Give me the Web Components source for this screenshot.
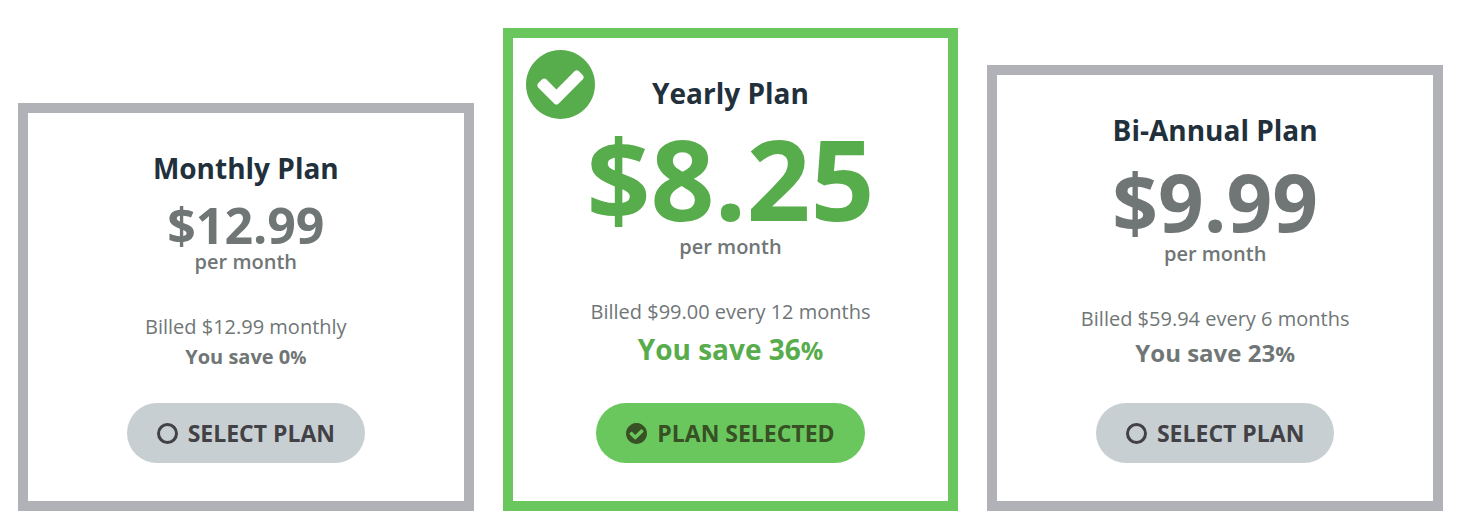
<!DOCTYPE html>
<html lang="en">
<head>
<meta charset="utf-8">
<meta name="viewport" content="width=device-width, initial-scale=1">
<title>Choose a plan</title>
<style>
  body {
    margin: 0;
    background: #fff;
    color: #707676;
    font-family: "Open Sans", "Noto Sans", sans-serif;
    font-size: 20px;
    line-height: 30px;
  }
</style>
</head>
<body>
<plan-list>
  <plan-card>
    <span slot="name">Monthly Plan</span>
    <span slot="price">$12.99</span>
    <span slot="billing">Billed $12.99 monthly</span>
    <span slot="saving">You save 0</span>
  </plan-card>
  <plan-card selected>
    <span slot="name">Yearly Plan</span>
    <span slot="price">$8.25</span>
    <span slot="billing">Billed $99.00 every 12 months</span>
    <span slot="saving">You save 36</span>
  </plan-card>
  <plan-card size="medium">
    <span slot="name">Bi-Annual Plan</span>
    <span slot="price">$9.99</span>
    <span slot="billing">Billed $59.94 every 6 months</span>
    <span slot="saving">You save 23</span>
  </plan-card>
</plan-list>

<template id="plan-list">
  <style>
    :host {
      display: grid;
      grid-template-columns: repeat(3, minmax(0, 1fr));
      align-items: end;
      gap: 29px;
      padding: 28px 19px 19px 18px;
    }
    @media (max-width: 900px) {
      :host { grid-template-columns: minmax(0, 1fr); }
    }
  </style>
  <slot></slot>
</template>

<template id="check-icon">
  <style>
    :host { display: block; }
    svg { display: block; width: 100%; height: 100%; }
    circle { fill: none; stroke: currentColor; stroke-width: 3; }
    path { fill: currentColor; }
    :host([checked]) .empty, :host(:not([checked])) .full { display: none; }
  </style>
  <svg class="empty" viewBox="0 0 21 21" aria-hidden="true"><circle cx="10.5" cy="10.5" r="9"/></svg>
  <svg class="full" viewBox="0 0 1536 1536" aria-hidden="true"><path d="M1284 606q0-28-18-46l-91-90q-19-19-45-19t-45 19l-408 407-226-226q-19-19-45-19t-45 19l-91 90q-18 18-18 46 0 27 18 45l362 362q19 19 45 19 27 0 46-19l543-543q18-18 18-45zm252 162q0 209-103 385.5t-279.5 279.5-385.5 103-385.5-103-279.5-279.5-103-385.5 103-385.5 279.5-279.5 385.5-103 385.5 103 279.5 279.5 103 385.5z"/></svg>
</template>

<template id="plan-button">
  <style>
    :host { display: block; }
    button {
      display: flex;
      align-items: center;
      gap: 10px;
      height: 60px;
      padding: 0 30px;
      border: 0;
      border-radius: 30px;
      background: #c8cfd2;
      color: #424246;
      font: 700 23px/30px "Open Sans", "Noto Sans", sans-serif;
      white-space: nowrap;
      cursor: pointer;
    }
    :host([selected]) button { background: #6ac75e; color: #375024; }
    check-icon { width: 21px; height: 21px; flex: none; }
  </style>
  <button type="button"><check-icon></check-icon><slot></slot></button>
</template>

<template id="plan-card">
  <style>
    :host {
      --accent: #707676;
      --price: 50px;
      --price-line: 50px;
      --price-gap: 12px;
      --saving: 20px;
      --saving-line: 30px;
      --percent: 18px;
      position: relative;
      display: flex;
      flex-direction: column;
      align-items: center;
      box-sizing: border-box;
      padding: 35px 10px 38px;
      border: 10px solid #b1b2b7;
      text-align: center;
    }
    :host([size="medium"]) {
      --price: 80px;
      --price-line: 82px;
      --price-gap: 10px;
      --saving: 24px;
      --saving-line: 38px;
      --percent: 22px;
    }
    :host([selected]) {
      --accent: #57ac4b;
      --price: 112px;
      --price-line: 114px;
      --price-gap: 8px;
      --saving: 28px;
      --saving-line: 45px;
      --percent: 25px;
      border-color: #6ac75e;
    }
    h2, p { margin: 0; }
    h2 { color: #22303c; font-size: 28px; font-weight: 700; line-height: 40px; }
    .price {
      margin-top: var(--price-gap);
      color: var(--accent);
      font-size: var(--price);
      font-weight: 700;
      line-height: var(--price-line);
    }
    .period { font-weight: 600; line-height: 24px; }
    .billing { margin-top: 38px; }
    .saving {
      color: var(--accent);
      font-size: var(--saving);
      font-weight: 700;
      line-height: var(--saving-line);
    }
    .percent { font-size: var(--percent); line-height: 20px; }
    plan-button { margin-top: 31px; }
    .badge {
      position: absolute;
      top: 12px;
      left: 13px;
      width: 69px;
      height: 69px;
      color: #57ac4b;
    }
    :host(:not([selected])) .badge { display: none; }
  </style>
  <check-icon class="badge" checked></check-icon>
  <h2><slot name="name"></slot></h2>
  <p class="price"><slot name="price"></slot></p>
  <p class="period">per month</p>
  <p class="billing"><slot name="billing"></slot></p>
  <p class="saving"><slot name="saving"></slot><span class="percent">%</span></p>
  <plan-button></plan-button>
</template>

<script>
  class TemplateElement extends HTMLElement {
    constructor() {
      super();
      const template = document.getElementById(this.localName);
      this.attachShadow({ mode: "open" }).append(template.content.cloneNode(true));
    }
  }

  class CheckIcon extends TemplateElement {}

  class PlanButton extends TemplateElement {
    static observedAttributes = ["selected"];
    attributeChangedCallback() { this.update(); }
    connectedCallback() { this.update(); }
    update() {
      const selected = this.hasAttribute("selected");
      this.shadowRoot.querySelector("check-icon").toggleAttribute("checked", selected);
      this.shadowRoot.querySelector("button").setAttribute("aria-pressed", selected);
      this.textContent = selected ? "PLAN SELECTED" : "SELECT PLAN";
    }
  }

  class PlanCard extends TemplateElement {
    static observedAttributes = ["selected"];
    connectedCallback() {
      this.update();
      this.shadowRoot.querySelector("plan-button").addEventListener("click", () => {
        this.dispatchEvent(new CustomEvent("plan-select", { bubbles: true }));
      });
    }
    attributeChangedCallback() { this.update(); }
    update() {
      this.shadowRoot.querySelector("plan-button")
        .toggleAttribute("selected", this.hasAttribute("selected"));
    }
  }

  class PlanList extends TemplateElement {
    connectedCallback() {
      this.addEventListener("plan-select", (event) => {
        for (const card of this.querySelectorAll("plan-card")) {
          card.toggleAttribute("selected", card === event.target);
        }
      });
    }
  }

  customElements.define("check-icon", CheckIcon);
  customElements.define("plan-button", PlanButton);
  customElements.define("plan-card", PlanCard);
  customElements.define("plan-list", PlanList);
</script>
</body>
</html>
